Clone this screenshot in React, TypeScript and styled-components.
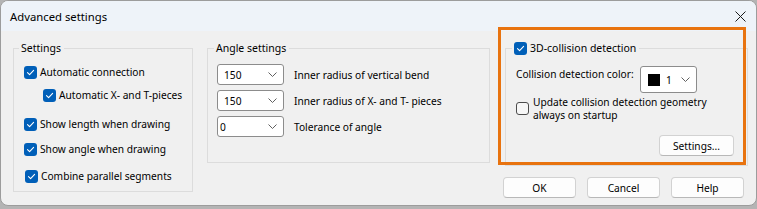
import styled, { createGlobalStyle } from "styled-components";

const GlobalStyle = createGlobalStyle`
  html, body {
    margin: 0;
    padding: 0;
    background: #b4b4b4;
  }
  body {
    font-family: "Segoe UI", "Noto Sans", sans-serif;
    font-size: 10px;
    color: #000;
  }
`;

const Window = styled.div`
  position: relative;
  width: 757px;
  height: 206px;
  box-sizing: border-box;
  border: 1px solid #9c9c9c;
  border-radius: 8px;
  overflow: hidden;
  background: #f0f0f0;
  display: flex;
  flex-direction: column;
`;

const TitleBar = styled.div`
  height: 30px;
  flex-shrink: 0;
  background: #eef3f9;
  display: flex;
  align-items: center;
  justify-content: space-between;
  padding: 0 10px 0 9px;
  font-size: 11.3px;
`;

const CloseButton = styled.div`
  width: 12px;
  height: 12px;
  display: flex;
  align-items: center;
  justify-content: center;
`;

const Body = styled.div`
  display: flex;
  align-items: flex-start;
  padding: 10px 0 0 12px;
`;

const Group = styled.fieldset<{ $w: number; $h: number; $ml?: number }>`
  box-sizing: border-box;
  width: ${(p) => p.$w}px;
  height: ${(p) => p.$h}px;
  margin: 0 0 0 ${(p) => p.$ml ?? 0}px;
  padding: 0;
  min-width: 0;
  border: 1px solid #dcdcdc;
  display: flex;
  flex-direction: column;
`;

const Legend = styled.legend<{ $ml: number }>`
  margin-left: ${(p) => p.$ml}px;
  padding: 0 3px 0 2px;
  line-height: 15px;
  font-size: 10.5px;
  display: flex;
  align-items: center;
  gap: 3px;
`;

const CheckList = styled.div`
  display: flex;
  flex-direction: column;
  padding: 8px 0 0 10px;
`;

const CheckRow = styled.label<{ $indent?: number; $mt?: number }>`
  display: flex;
  align-items: center;
  gap: 3px;
  height: 16px;
  margin-left: ${(p) => p.$indent ?? 0}px;
  margin-top: ${(p) => p.$mt ?? 0}px;
  white-space: nowrap;
  font-size: 10.2px;
`;

const Box = styled.span<{ $checked: boolean }>`
  width: 13px;
  height: 13px;
  box-sizing: border-box;
  flex-shrink: 0;
  border-radius: 3px;
  display: flex;
  align-items: center;
  justify-content: center;
  background: ${(p) => (p.$checked ? "#005fb8" : "#f7f7f7")};
  border: ${(p) => (p.$checked ? "none" : "1px solid #4c4c4c")};
`;

const ComboList = styled.div`
  display: flex;
  flex-direction: column;
  gap: 5px;
  padding: 8px 0 0 9px;
`;

const ComboRow = styled.div`
  display: flex;
  align-items: center;
  gap: 10px;
  white-space: nowrap;
  font-size: 10.2px;
`;

const Combo = styled.div<{ $w: number; $h: number; $pl: number }>`
  box-sizing: border-box;
  width: ${(p) => p.$w}px;
  height: ${(p) => p.$h}px;
  background: #fff;
  border: 1px solid #8c8c8c;
  border-radius: 3px;
  display: flex;
  align-items: center;
  padding: 0 6px 0 ${(p) => p.$pl}px;
  gap: 6px;
  flex-shrink: 0;
`;

const ComboValue = styled.span`
  flex: 1;
`;

const Swatch = styled.span`
  width: 12px;
  height: 12px;
  background: #000;
`;

const RightColumn = styled.div`
  display: flex;
  flex-direction: column;
  margin-left: 13px;
`;

const CollisionBody = styled.div`
  display: flex;
  flex-direction: column;
  padding: 10px 0 0 10px;
  font-size: 10.2px;
`;

const ColorRow = styled.div`
  display: flex;
  align-items: flex-start;
`;

const ColorLabel = styled.span`
  width: 124px;
  margin-top: 1px;
  line-height: 15px;
  white-space: nowrap;
`;

const StartupRow = styled.label`
  display: flex;
  align-items: center;
  gap: 4px;
  margin-top: 3px;
`;

const StartupText = styled.span`
  line-height: 12.5px;
`;

const Button = styled.button<{ $w: number }>`
  box-sizing: border-box;
  width: ${(p) => p.$w}px;
  height: 21px;
  padding: 0;
  font: inherit;
  font-size: 10.2px;
  color: #000;
  background: #fdfdfd;
  border: 1px solid #d2d2d2;
  border-bottom-color: #b8b8b8;
  border-radius: 4px;
`;

const SettingsButtonWrap = styled.div`
  display: flex;
  justify-content: flex-end;
  padding-right: 13px;
  margin-top: 14px;
`;

const ButtonRow = styled.div`
  display: flex;
  gap: 11px;
  margin-top: 11px;
`;

const Highlight = styled.div`
  position: absolute;
  left: 497px;
  top: 26px;
  width: 248px;
  height: 138px;
  box-sizing: border-box;
  border: 3px solid #e8730f;
  pointer-events: none;
`;

function Check({ checked }: { checked: boolean }) {
  return (
    <Box $checked={checked}>
      {checked && (
        <svg width="9" height="9" viewBox="0 0 9 9">
          <path d="M1.5 4.6 L3.6 6.6 L7.6 2.4" fill="none" stroke="#fff" strokeWidth="1.1" strokeLinecap="round" strokeLinejoin="round" />
        </svg>
      )}
    </Box>
  );
}

function Chevron() {
  return (
    <svg width="9" height="5" viewBox="0 0 9 5">
      <path d="M0.5 0.5 L4.5 4.5 L8.5 0.5" fill="none" stroke="#606060" strokeWidth="1" />
    </svg>
  );
}

const settings = [
  { label: "Automatic connection", indent: 0, mt: 0 },
  { label: "Automatic X- and T-pieces", indent: 19, mt: 7 },
  { label: "Show length when drawing", indent: 0, mt: 13 },
  { label: "Show angle when drawing", indent: 0, mt: 9 },
  { label: "Combine parallel segments", indent: 1, mt: 11 },
];

const angles = [
  { value: "150", label: "Inner radius of vertical bend", pl: 6 },
  { value: "150", label: "Inner radius of X- and T- pieces", pl: 6 },
  { value: "0", label: "Tolerance of angle", pl: 2 },
];

export default function App() {
  return (
    <>
      <GlobalStyle />
      <Window>
        <TitleBar>
          <span>Advanced settings</span>
          <CloseButton>
            <svg width="11" height="11" viewBox="0 0 11 11">
              <path d="M0.5 0.5 L10.5 10.5 M10.5 0.5 L0.5 10.5" stroke="#1a1a1a" strokeWidth="1" />
            </svg>
          </CloseButton>
        </TitleBar>
        <Body>
          <Group $w={180} $h={151}>
            <Legend $ml={5}>Settings</Legend>
            <CheckList>
              {settings.map((s) => (
                <CheckRow key={s.label} $indent={s.indent} $mt={s.mt}>
                  <Check checked />
                  {s.label}
                </CheckRow>
              ))}
            </CheckList>
          </Group>
          <Group $w={283} $h={122} $ml={14}>
            <Legend $ml={6}>Angle settings</Legend>
            <ComboList>
              {angles.map((a) => (
                <ComboRow key={a.label}>
                  <Combo $w={67} $h={21} $pl={a.pl}>
                    <ComboValue>{a.value}</ComboValue>
                    <Chevron />
                  </Combo>
                  {a.label}
                </ComboRow>
              ))}
            </ComboList>
          </Group>
          <RightColumn>
            <Group $w={243} $h={125} $ml={2}>
              <Legend $ml={6}>
                <Check checked />
                3D-collision detection
              </Legend>
              <CollisionBody>
                <ColorRow>
                  <ColorLabel>Collision detection color:</ColorLabel>
                  <Combo $w={57} $h={27} $pl={7}>
                    <Swatch />
                    <ComboValue>1</ComboValue>
                    <Chevron />
                  </Combo>
                </ColorRow>
                <StartupRow>
                  <Check checked={false} />
                  <StartupText>
                    Update collision detection geometry
                    <br />
                    always on startup
                  </StartupText>
                </StartupRow>
                <SettingsButtonWrap>
                  <Button $w={75}>Settings...</Button>
                </SettingsButtonWrap>
              </CollisionBody>
            </Group>
            <ButtonRow>
              <Button $w={73}>OK</Button>
              <Button $w={73}>Cancel</Button>
              <Button $w={73}>Help</Button>
            </ButtonRow>
          </RightColumn>
        </Body>
        <Highlight />
      </Window>
    </>
  );
}
